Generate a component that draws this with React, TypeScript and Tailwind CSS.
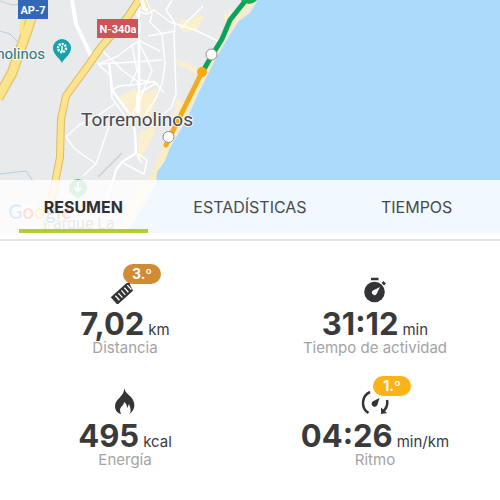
import { useState, type ReactNode } from "react";

const TABS = ["RESUMEN", "ESTADÍSTICAS", "TIEMPOS"];

function RouteMap() {
  return (
    <svg
      className="block h-auto w-full"
      viewBox="0 0 500 233"
      role="img"
      aria-label="Mapa de Torremolinos"
      fontFamily="Roboto, sans-serif"
    >
      <rect width="500" height="233" fill="#e9eaec" />

      {/* built-up areas */}
      <g fill="#fbf0cd">
        <path d="M181 18l10 3 8-8 5 5-8 12-12 3-5-7z" />
        <path d="M119 97l14-8 14 4 10-5-2 14-4 12 2 8-18-2-8-12z" />
        <path d="M176 59l20 8 3 8-22-11zM176 98l9 5-6 14-5-3z" />
        <path d="M222 15l10-4-6 12zM139 132l16-6-2 12-11 18-4 4z" />
      </g>
      <path
        d="M252 0L226 31 212 59 195 91 168 142 154 177 142 192 129 215 122 233"
        fill="none"
        stroke="#f8edc5"
        strokeWidth="7"
      />

      {/* sea */}
      <path
        d="M258 0L250 13 239 21 228 38 216 58 199 92 187 119 170 148 165 161 157 172 156 184 147 199 134 222 127 233H500V0z"
        fill="#abdafb"
      />

      {/* streams */}
      <path
        d="M0 1l12 4 10-1 14 0M0 31l10 3 8 8M0 174l26-3 7 10"
        fill="none"
        stroke="#b3cfdf"
        strokeWidth="1"
      />
      <path d="M98 177l24-24" stroke="#ccced1" strokeWidth="1.5" />

      {/* local streets */}
      <g fill="none" stroke="#fff" strokeWidth="1.5" strokeLinejoin="round">
        <path d="M136 11l4 14-2 16 9 18 5 12-8 18-5 13-7 13" />
        <path d="M146 0l6 14-2 8 12 12 3 30-3 20-6 14-11 17" />
        <path d="M172 0l-6 10 9 13-1 11 2 60-5 14-9 7" />
        <path d="M136 11l11 3 7-4 16 12 25 8 25 12M181 28l22-22" />
        <path d="M99 64l35-2 28-2M99 64l19-8 14-11 8-4 20 10" />
        <path d="M102 50l20 20 19 14-22 2-7 4M132 45l5 26-8 16" />
        <path d="M140 80l17 3-20 11 0 20M141 84l13-3 10 12" />
        <path d="M66 137l13-12 20-10 17-12M66 137l9 12 21 15-13 12" />
        <path d="M110 123l-5 15-9 26M137 153l10 7-3 14-21-11M137 155l5 8" />
        <path d="M97 63l13 12 2 23 18 25M148 36l28-5" />
      </g>
      <g fill="none" stroke="#fff" strokeLinejoin="round">
        <path d="M72 0l4 24 18 38" strokeWidth="4" />
        <path
          d="M109 62l3 28 19 26 4 16 1 21-14 9-6 8-3 11-7 18M139 0v114"
          strokeWidth="2.5"
        />
      </g>

      {/* motorways */}
      <g fill="none" strokeLinejoin="round">
        <path d="M37 0L27 31 12 73-2 98" stroke="#e6c873" strokeWidth="11" />
        <path d="M37 0L27 31 12 73-2 98" stroke="#fbe48d" strokeWidth="8" />
        <path d="M23 17l-2 15 6 5" stroke="#fbe48d" strokeWidth="4" />
        <path
          d="M139 0L127 18 101 47 90 63 66 96 61 119 60 157 55 183 44 233"
          stroke="#dfb963"
          strokeWidth="8"
        />
        <path
          d="M139 0L127 18 101 47 90 63 66 96 61 119 60 157 55 183 44 233"
          stroke="#fbe48d"
          strokeWidth="6"
        />
        <path d="M144 0l5 11" stroke="#fae7a3" strokeWidth="3" />
        <path d="M142 0l2 8 4 3" stroke="#fff" strokeWidth="4" />
      </g>

      {/* road signs */}
      <rect x="18" y="0" width="30" height="19" fill="#3268b7" />
      <rect x="97" y="19" width="41" height="19" fill="#cf5358" />
      <g fill="#fff" fontSize="11" fontWeight="700" textAnchor="middle">
        <text x="33" y="14">AP-7</text>
        <text x="118" y="33">N-340a</text>
      </g>

      {/* attraction pin */}
      <text
        x="45"
        y="59"
        fontSize="15"
        textAnchor="end"
        fill="#28737b"
        stroke="#f4f5f6"
        strokeWidth="2"
        paintOrder="stroke"
      >
        Torremolinos
      </text>
      <path d="M62 63c-2-5-9-8-9-15a9 9 0 0 1 18 0c0 7-7 10-9 15z" fill="#17a1ad" />
      <circle cx="62" cy="48" r="4" fill="none" stroke="#fff" strokeWidth="2.5" strokeDasharray="2 1" />
      <path d="M62 46v6" stroke="#fff" strokeWidth="1.5" />

      {/* tracked route */}
      <g fill="none" strokeLinecap="round" strokeLinejoin="round" strokeWidth="5">
        <path d="M246 0L230 20 222 39 211 57 203 71" stroke="#0aa35c" />
        <path d="M202 72L166 145" stroke="#f3aa1b" />
      </g>
      <circle cx="249" cy="-6" r="10" fill="#1bad55" />
      <circle cx="202" cy="72" r="5" fill="#faa915" />
      <text
        x="137"
        y="126"
        fontSize="19"
        textAnchor="middle"
        fill="#47494d"
        stroke="#f5f5f5"
        strokeWidth="2"
        paintOrder="stroke"
      >
        Torremolinos
      </text>
      <g fill="#fff" stroke="#8e8e8e" strokeWidth="1">
        <circle cx="211.5" cy="54.5" r="5.5" />
        <circle cx="168.5" cy="137" r="5.5" />
      </g>

      {/* park */}
      <path d="M78 199c-2-4-9-4-9-11a9 9 0 0 1 18 0c0 7-7 7-9 11z" fill="#5cbb70" />
      <path d="M78 182v9m-3-3l3 3 3-3" stroke="#fff" strokeWidth="2" fill="none" />
      <text x="43" y="229" fontSize="16" fill="#6a8f71">
        Parque La
      </text>
      <text
        x="8"
        y="219"
        fontSize="20"
        fontWeight="700"
        fontFamily="Lato, sans-serif"
        stroke="#fff"
        strokeWidth="2"
        paintOrder="stroke"
      >
        <tspan fill="#4285f4">G</tspan>
        <tspan fill="#ea4335">o</tspan>
        <tspan fill="#fbbc05">o</tspan>
        <tspan fill="#4285f4">g</tspan>
        <tspan fill="#34a853">l</tspan>
        <tspan fill="#ea4335">e</tspan>
      </text>
    </svg>
  );
}

function RulerIcon() {
  return (
    <svg className="size-7" viewBox="0 0 28 28" aria-hidden="true">
      <g transform="rotate(-42 12 17)">
        <path d="M0 12h21l5 2-3 1-2 7H0z" fill="#343436" />
        <path d="M4.500 14v6M8.500 14v6M12.500 14v6M16.500 14v6M20.500 14v6" stroke="#fff" strokeWidth="1.300" />
      </g>
    </svg>
  );
}

function StopwatchIcon() {
  return (
    <svg className="size-7" viewBox="0 0 28 28" aria-hidden="true">
      <circle cx="13.500" cy="16" r="10.300" fill="#343436" />
      <path d="M10 3h7.500M21.500 6l2.500 2.500" stroke="#343436" strokeWidth="2.500" />
      <path d="M19 11l-3.500 7a2.500 2.500 0 1 1-3.500-3.500z" fill="#fff" />
    </svg>
  );
}

function FlameIcon() {
  return (
    <svg className="size-7" viewBox="0 0 28 28" aria-hidden="true">
      <path
        d="M13 0c1 4 4 6 7 9 3 4 4 7 3 11-1 3-3 5-5 6 2-2 2-4 1-7l-1-3c-1 2-1 3-2 4 0-3-1-5-3-6 0 4-4 4-4 8 0 2 1 3 1 4-4-1-6-4-6-8 0-7 10-10 9-18z"
        fill="#343436"
      />
    </svg>
  );
}

function PaceIcon() {
  return (
    <svg className="size-7" viewBox="0 0 28 28" fill="none" aria-hidden="true">
      <path d="M7.500 25A12 12 0 0 1 9 4" stroke="#343436" strokeWidth="2.500" />
      <path d="M26 12a12 12 0 0 1-3.500 11" stroke="#343436" strokeWidth="2.500" />
      <path d="M20 19.500l0 6.500 6-1z" fill="#343436" />
      <path d="M18.500 10l-2 6.500a3 3 0 1 1-4-3.500z" fill="#343436" />
    </svg>
  );
}

type StatProps = {
  icon: ReactNode;
  value: string;
  unit: string;
  label: string;
  rank?: string;
  rankColor?: string;
};

function Stat({ icon, value, unit, label, rank, rankColor }: StatProps) {
  return (
    <div className="flex flex-col items-center">
      <div className="relative">
        {icon}
        {rank && (
          <span
            className={`absolute -top-3 left-3 flex h-5 w-[38px] items-center justify-center rounded-full text-sm font-bold text-white ${rankColor}`}
          >
            {rank}
          </span>
        )}
      </div>
      <p className="mt-1 flex items-baseline gap-1 whitespace-nowrap text-[#3a3a3c]">
        <span className="text-[31px] leading-8 font-bold">{value}</span>
        <span className="text-[15px] leading-5">{unit}</span>
      </p>
      <p className="text-[15px] leading-4 text-[#a3a3a5]">{label}</p>
    </div>
  );
}

export default function App() {
  const [active, setActive] = useState(TABS[0]);

  return (
    <main className="min-h-screen overflow-hidden bg-white font-['Inter',sans-serif]">
      <div className="relative border-b-2 border-[#e4e5e6] pb-[6px]">
        <RouteMap />
        <div
          role="tablist"
          className="absolute inset-x-0 bottom-[6px] grid h-[53px] grid-cols-3 bg-white/83"
        >
          {TABS.map((tab) => (
            <button
              key={tab}
              type="button"
              role="tab"
              aria-selected={active === tab}
              onClick={() => setActive(tab)}
              className={`mx-[19px] border-b-4 pt-1 text-base whitespace-nowrap ${
                active === tab
                  ? "border-[#b3cf2b] font-bold text-[#2f3032]"
                  : "border-transparent text-[#48494c]"
              }`}
            >
              {tab}
            </button>
          ))}
        </div>
      </div>

      <section className="grid grid-cols-2 gap-y-8 pt-[35px]">
        <Stat
          icon={<RulerIcon />}
          value="7,02"
          unit="km"
          label="Distancia"
          rank="3.º"
          rankColor="bg-[#d18b34]"
        />
        <Stat icon={<StopwatchIcon />} value="31:12" unit="min" label="Tiempo de actividad" />
        <Stat icon={<FlameIcon />} value="495" unit="kcal" label="Energía" />
        <Stat
          icon={<PaceIcon />}
          value="04:26"
          unit="min/km"
          label="Ritmo"
          rank="1.º"
          rankColor="bg-[#fbb316]"
        />
      </section>
    </main>
  );
}
